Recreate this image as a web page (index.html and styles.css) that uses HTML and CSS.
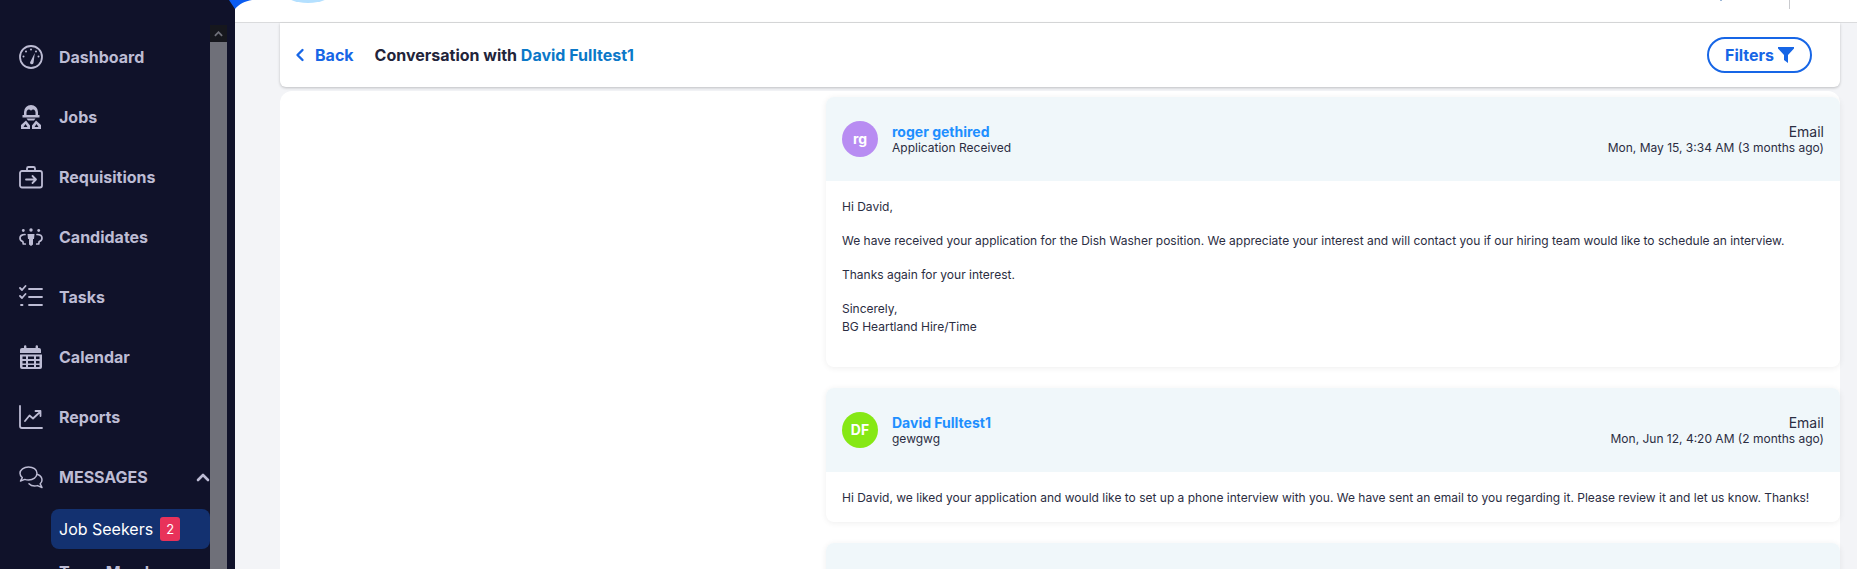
FILE: index.html
```html
<!DOCTYPE html>
<html>
<head>
    <title>Conversation with David Fulltest1</title>
    <meta name="viewport" content="width=device-width, initial-scale=1.0">
    <link rel="stylesheet" href="styles.css">
</head>
<body>
    <div class="app">
        <aside class="sidebar">
            <nav class="nav">
                <a class="nav-item">
                    <svg class="nav-icon" viewBox="0 0 24 24" fill="none" stroke="currentColor" stroke-width="1.8" stroke-linecap="round"><circle cx="12" cy="12" r="11"/><path d="M11 17.500L15.800 8l-1.300 10a1.800 1.800 0 0 1-3.500-.5z" fill="currentColor" stroke="none"/><path d="M12 4.500v.1M7 6.500v.1M4.500 11.500v.1M19.500 11.500v.1M17 6.500v.1" stroke-width="2"/></svg>
                    <span>Dashboard</span>
                </a>
                <a class="nav-item">
                    <svg class="nav-icon" viewBox="0 0 24 24" fill="currentColor"><path fill-rule="evenodd" d="M5 10V7a7 7 0 0 1 14 0v3h1.500v2.500h-17V10zM7.500 10h9V7.500c0-1.500-1-3-2.300-3-.9 0-1.600.5-2.200 1.200-.6-.7-1.300-1.200-2.200-1.200-1.300 0-2.300 1.500-2.300 3z"/><path d="M7.500 13.500h9l-1.500 2H9z"/><path fill-rule="evenodd" d="M7 15.500L2 20v4h9v-3.500zM6.500 19l-2 3h4zM17 15.500l5 4.500v4h-9v-3.500zM17.500 19l2 3h-4z"/></svg>
                    <span>Jobs</span>
                </a>
                <a class="nav-item">
                    <svg class="nav-icon" viewBox="0 0 24 24" fill="none" stroke="currentColor" stroke-width="1.800" stroke-linecap="round" stroke-linejoin="round"><rect x="1" y="6" width="22" height="16.500" rx="2"/><path d="M8 6V3.500A1.500 1.500 0 0 1 9.500 2h5A1.500 1.500 0 0 1 16 3.500V6M7 14.500h10M13.500 11l3.500 3.500-3.500 3.500"/></svg>
                    <span>Requisitions</span>
                </a>
                <a class="nav-item">
                    <svg class="nav-icon" viewBox="0 0 24 24" fill="none" stroke="currentColor" stroke-width="1.700" stroke-linecap="round" stroke-linejoin="round"><circle cx="4.300" cy="5.500" r="1.400" fill="currentColor" stroke="none"/><circle cx="12" cy="5" r="1.700" fill="currentColor" stroke="none"/><circle cx="19.700" cy="5.500" r="1.400" fill="currentColor" stroke="none"/><path d="M8.500 9h7L15 14h-1v5.500L12 21l-2-1.500V14H9z" fill="currentColor" stroke="none"/><path d="M6 9.500C3 9.500 1 11 1 13s1.200 3 2.800 3.500l.5 2.500h2M18 9.500c3 0 5 1.500 5 3.500s-1.200 3-2.800 3.500l-.5 2.500h-2"/></svg>
                    <span>Candidates</span>
                </a>
                <a class="nav-item">
                    <svg class="nav-icon" viewBox="0 0 24 24" fill="none" stroke="currentColor" stroke-width="1.800" stroke-linecap="round" stroke-linejoin="round"><path d="M1 3l2 2 3.500-4M1 11l2 2 3.500-4M10 4h13M10 12h13M10 20h13M2 20h1.500"/></svg>
                    <span>Tasks</span>
                </a>
                <a class="nav-item">
                    <svg class="nav-icon" viewBox="0 0 24 24" fill="currentColor"><path d="M5 1.500a1.200 1.200 0 0 1 2.400 0V3h9.200V1.500a1.200 1.200 0 0 1 2.400 0V3h1a2 2 0 0 1 2 2v3H1V5a2 2 0 0 1 2-2h2z"/><path fill-rule="evenodd" d="M1 9.500h22V22a2 2 0 0 1-2 2H3a2 2 0 0 1-2-2zM3.500 11.500V14h3.500v-2.500zM9 11.500V14h6v-2.500zM17 11.500V14h3.500v-2.500zM3.500 16v2.500h3.500V16zM9 16v2.500h6V16zM17 16v2.500h3.500V16zM3.500 20v2h3.500v-2zM9 20v2h6v-2zM17 20v2h3.500v-2z"/></svg>
                    <span>Calendar</span>
                </a>
                <a class="nav-item">
                    <svg class="nav-icon" viewBox="0 0 24 24" fill="none" stroke="currentColor" stroke-width="1.800" stroke-linecap="round" stroke-linejoin="round"><path d="M1 1v20a2 2 0 0 0 2 2h20M6 16l4.500-5.500 3.500 3 7.500-7M16.500 6h5v5"/></svg>
                    <span>Reports</span>
                </a>
                <a class="nav-item">
                    <svg class="nav-icon" viewBox="0 0 24 24" fill="none" stroke="currentColor" stroke-width="1.500" stroke-linecap="round" stroke-linejoin="round"><path d="M9.500 2C4.800 2 1 4.800 1 8.300c0 1.700.9 3.200 2.300 4.300L1.500 16l4.300-1.600c1.100.4 2.400.6 3.700.6 4.700 0 8.500-2.900 8.500-6.700S14.200 2 9.500 2z"/><path d="M18.600 9.500c2.600 1 4.400 3 4.400 5.500 0 1.500-.7 2.800-1.800 3.800l1.800 3.700-4.500-1.900c-.9.300-1.800.4-2.800.4-2.300 0-4.400-.9-5.700-2.300"/></svg>
                    <span>MESSAGES</span>
                    <svg class="nav-chevron" viewBox="0 0 14 9" fill="none" stroke="currentColor" stroke-width="2.600" stroke-linecap="round" stroke-linejoin="round"><path d="M2 7l5-5 5 5"/></svg>
                </a>
                <a class="sub-item active">Job Seekers <span class="badge">2</span></a>
                <a class="sub-item">Team Members</a>
            </nav>
            <div class="scrollbar">
                <div class="scroll-up">
                    <svg viewBox="0 0 10 6" fill="none" stroke="#6f7079" stroke-width="2"><path d="M1 5l4-4 4 4"/></svg>
                </div>
                <div class="scroll-thumb"></div>
            </div>
        </aside>

        <svg class="logo-blob" viewBox="0 0 23 9"><path d="M0 0h23C16 1 10 4 6 9 4 6 2 3 0 0z" fill="#0b5cf0"/></svg>
        <div class="logo-pill"></div>

        <div class="page">
            <header class="topbar">
                <div class="topbar-dot"></div>
                <div class="topbar-divider"></div>
            </header>
            <div class="content">
                <div class="conv-header">
                    <a class="back">
                        <svg viewBox="0 0 10 14" fill="none" stroke="currentColor" stroke-width="2.400" stroke-linecap="round" stroke-linejoin="round"><path d="M7.500 2L2.500 7l5 5"/></svg>
                        Back
                    </a>
                    <div class="conv-title">Conversation with <span class="conv-name">David Fulltest1</span></div>
                    <button class="filters">Filters
                        <svg viewBox="0 0 16 16" fill="currentColor"><path d="M0 0h16v1.500L10 8v8l-4-3V8L0 1.500z"/></svg>
                    </button>
                </div>

                <div class="thread">
                    <div class="message">
                        <div class="msg-head">
                            <div class="avatar purple">rg</div>
                            <div class="msg-who">
                                <div class="msg-name">roger gethired</div>
                                <div class="msg-sub">Application Received</div>
                            </div>
                            <div class="msg-meta">
                                <div class="msg-type">Email</div>
                                <div class="msg-sub">Mon, May 15, 3:34 AM (3 months ago)</div>
                            </div>
                        </div>
                        <div class="msg-body">
                            <p>Hi David,</p>
                            <p>We have received your application for the Dish Washer position. We appreciate your interest and will contact you if our hiring team would like to schedule an interview.</p>
                            <p>Thanks again for your interest.</p>
                            <p>Sincerely,<br>BG Heartland Hire/Time</p>
                        </div>
                    </div>

                    <div class="message">
                        <div class="msg-head">
                            <div class="avatar green">DF</div>
                            <div class="msg-who">
                                <div class="msg-name">David Fulltest1</div>
                                <div class="msg-sub">gewgwg</div>
                            </div>
                            <div class="msg-meta">
                                <div class="msg-type">Email</div>
                                <div class="msg-sub">Mon, Jun 12, 4:20 AM (2 months ago)</div>
                            </div>
                        </div>
                        <div class="msg-body short">
                            <p>Hi David, we liked your application and would like to set up a phone interview with you. We have sent an email to you regarding it. Please review it and let us know. Thanks!</p>
                        </div>
                    </div>

                    <div class="message">
                        <div class="msg-head"></div>
                    </div>
                </div>
            </div>
        </div>
    </div>
</body>
</html>
```

FILE: styles.css
```css
* {
    box-sizing: border-box;
}
html, body {
    margin: 0;
    height: 100%;
    overflow: hidden;
}
body {
    font-family: Inter, "Liberation Sans", sans-serif;
    color: #2b2d42;
    background: #f3f4f7;
}
.app {
    display: flex;
    position: relative;
    height: 569px;
    overflow: hidden;
}

/* sidebar */
.sidebar {
    display: flex;
    flex: 0 0 235px;
    background: #10122a;
    overflow: hidden;
}
.nav {
    flex: 0 0 210px;
    padding-top: 27px;
    color: #bdbcd4;
}
.nav-item {
    display: flex;
    align-items: center;
    height: 60px;
    padding-left: 19px;
    font-size: 16px;
    font-weight: 700;
}
.nav-icon {
    flex: none;
    width: 24px;
    height: 24px;
    margin-right: 16px;
}
.nav-chevron {
    width: 14px;
    height: 9px;
    margin-left: auto;
}
.sub-item {
    display: flex;
    align-items: center;
    height: 40px;
    margin: 3px 0 0 51px;
    padding-left: 8px;
    border-radius: 8px;
    font-size: 16px;
    font-weight: 700;
}
.sub-item.active {
    background: #133170;
    color: #fff;
    margin-top: 2px;
    font-weight: 400;
}
.badge {
    display: inline-block;
    width: 20px;
    height: 24px;
    margin-left: 7px;
    border-radius: 3px;
    background: #e8325a;
    color: #fff;
    font-size: 13px;
    font-weight: 400;
    line-height: 24px;
    text-align: center;
}
.scrollbar {
    flex: 0 0 17px;
    padding-top: 25px;
}
.scroll-up {
    display: flex;
    align-items: center;
    justify-content: center;
    height: 17px;
    background: #16171d;
}
.scroll-up svg {
    width: 9px;
    height: 6px;
}
.scroll-thumb {
    height: 527px;
    background: #6f7079;
}

/* logo peeking in at the top */
.logo-blob {
    position: absolute;
    left: 229px;
    top: 0;
    width: 23px;
    height: 9px;
}
.logo-pill {
    position: absolute;
    left: 283px;
    top: -20px;
    width: 50px;
    height: 23px;
    background: #b4e0ff;
    border-radius: 50%;
}

/* main column */
.page {
    flex: 1;
    min-width: 0;
}
.topbar {
    display: flex;
    justify-content: flex-end;
    height: 23px;
    padding-right: 67px;
    background: #fff;
    border-bottom: 1px solid #dadbdd;
}
.topbar-dot {
    width: 2px;
    height: 1px;
    margin-right: 67px;
    background: #9db8d8;
}
.topbar-divider {
    width: 1px;
    height: 9px;
    background: #c9cace;
}
.content {
    padding: 0 17px 0 45px;
}
.conv-header {
    display: flex;
    align-items: center;
    height: 64px;
    padding: 0 28px 0 15px;
    background: #fff;
    border-radius: 0 0 6px 6px;
    box-shadow: 0 1px 3px rgba(0, 0, 0, 0.22);
}
.back {
    display: flex;
    align-items: center;
    color: #1766e6;
    font-size: 16px;
    font-weight: 700;
}
.back svg {
    width: 10px;
    height: 14px;
    margin-right: 10px;
}
.conv-title {
    margin-left: 21px;
    font-size: 16px;
    font-weight: 700;
    color: #22243a;
}
.conv-name {
    color: #0b78c8;
}
.filters {
    display: flex;
    align-items: center;
    height: 36px;
    margin-left: auto;
    padding: 0 16px;
    border: 2px solid #1766e6;
    border-radius: 18px;
    background: #fff;
    color: #1766e6;
    font-family: inherit;
    font-size: 16px;
    font-weight: 700;
}
.filters svg {
    width: 16px;
    height: 16px;
    margin-left: 4px;
}
.thread {
    height: 500px;
    margin-top: 4px;
    padding: 6px 0 0 546px;
    background: #fff;
    border-radius: 12px 12px 0 0;
}
.message {
    margin-bottom: 21px;
    background: #fff;
    border-radius: 8px;
    box-shadow: 0 1px 6px rgba(0, 0, 0, 0.07);
}
.msg-head {
    display: flex;
    align-items: center;
    height: 84px;
    padding: 0 16px;
    background: #f0f7fa;
    border-radius: 8px 8px 0 0;
}
.avatar {
    flex: none;
    width: 36px;
    height: 36px;
    margin-right: 14px;
    border-radius: 50%;
    color: #fff;
    font-size: 14px;
    font-weight: 700;
    line-height: 36px;
    text-align: center;
}
.avatar.purple {
    background: #b88cf2;
}
.avatar.green {
    background: #86e814;
}
.msg-name {
    color: #1e8fff;
    font-size: 14px;
    font-weight: 700;
    line-height: 17px;
}
.msg-sub {
    font-size: 12px;
    line-height: 16px;
}
.msg-meta {
    margin-left: auto;
    text-align: right;
}
.msg-type {
    font-size: 14px;
    line-height: 17px;
}
.msg-body {
    height: 186px;
    padding: 17px 16px 0;
    font-size: 12px;
    line-height: 18px;
}
.msg-body.short {
    height: 50px;
}
.msg-body p {
    margin: 0 0 16px;
}
```
